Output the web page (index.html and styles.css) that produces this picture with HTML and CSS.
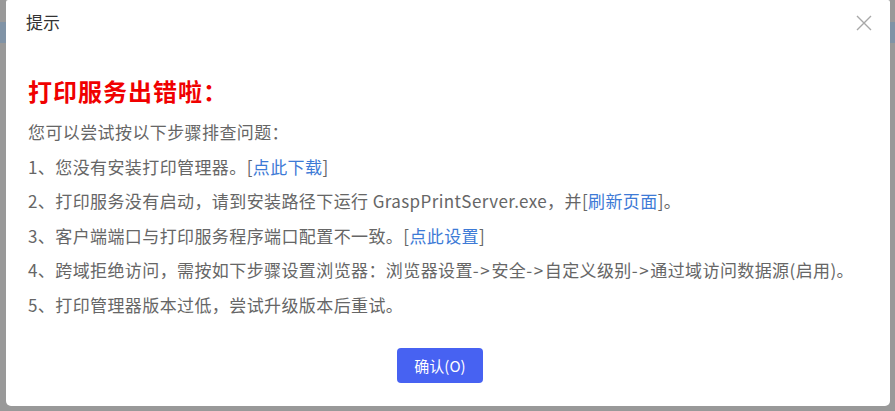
FILE: index.html
```html
<!DOCTYPE html>
<html lang="zh-CN">
<head>
<meta charset="utf-8">
<title>提示</title>
<link rel="stylesheet" href="styles.css">
</head>
<body>
<div class="backdrop">
  <div class="dialog">
    <div class="dialog-header">
      <span class="dialog-title">提示</span>
      <span class="dialog-close">
        <svg width="16" height="16" viewBox="0 0 16 16"><path d="M1 1L15 15M15 1L1 15" stroke="#a8a8a8" stroke-width="1.4" fill="none"/></svg>
      </span>
    </div>
    <div class="dialog-body">
      <h2 class="err-title">打印服务出错啦：</h2>
      <p class="line">您可以尝试按以下步骤排查问题：</p>
      <p class="line">1、您没有安装打印管理器。[<a class="link">点此下载</a>]</p>
      <p class="line">2、打印服务没有启动，请到安装路径下运行 GraspPrintServer.exe，并[<a class="link">刷新页面</a>]。</p>
      <p class="line">3、客户端端口与打印服务程序端口配置不一致。[<a class="link">点此设置</a>]</p>
      <p class="line">4、跨域拒绝访问，需按如下步骤设置浏览器：浏览器设置<span class="arrow">-&gt;</span>安全<span class="arrow">-&gt;</span>自定义级别<span class="arrow">-&gt;</span>通过域访问数据源(启用)。</p>
      <p class="line">5、打印管理器版本过低，尝试升级版本后重试。</p>
    </div>
    <div class="dialog-footer">
      <button class="btn-primary">确认(O)</button>
    </div>
  </div>
</div>
</body>
</html>
```

FILE: styles.css
```css
html, body {
  margin: 0;
  padding: 0;
}
body {
  width: 895px;
  height: 411px;
  overflow: hidden;
  background: linear-gradient(#999999 0 22px, #8093a6 22px 43px, #999999 43px);
  font-family: "Noto Sans CJK SC", "Microsoft YaHei", sans-serif;
}
.backdrop {
  padding: 0 5px 5px 6px;
  height: 411px;
  box-sizing: border-box;
}
.dialog {
  background: #fff;
  height: 406px;
  border-radius: 2px 2px 5px 5px;
  display: flex;
  flex-direction: column;
}
.dialog-header {
  height: 44px;
  display: flex;
  align-items: center;
  justify-content: space-between;
  padding: 0 18px 0 20px;
}
.dialog-title {
  font-size: 17px;
  color: #333;
  line-height: 22px;
  margin-top: -1px;
}
.dialog-close {
  display: flex;
  width: 16px;
  height: 16px;
  margin-top: 1px;
}
.dialog-body {
  padding: 32px 20px 0 22px;
}
.err-title {
  margin: 0 0 9px;
  font-size: 24px;
  line-height: 30px;
  font-weight: bold;
  letter-spacing: 1px;
  color: #f00000;
}
.line {
  margin: 0;
  font-size: 17px;
  letter-spacing: 0.4px;
  line-height: 34.6px;
  color: #666;
  white-space: nowrap;
}
.arrow {
  letter-spacing: 1.6px;
}
.link {
  color: #3d7ad6;
  cursor: pointer;
}
.dialog-footer {
  padding-top: 25px;
  padding-left: 391px;
}
.btn-primary {
  width: 86px;
  height: 35px;
  border: none;
  border-radius: 4px;
  background: #4762f2;
  color: #fff;
  font-family: "Noto Sans CJK SC", "Microsoft YaHei", sans-serif;
  font-size: 15px;
  padding: 0;
}
```
